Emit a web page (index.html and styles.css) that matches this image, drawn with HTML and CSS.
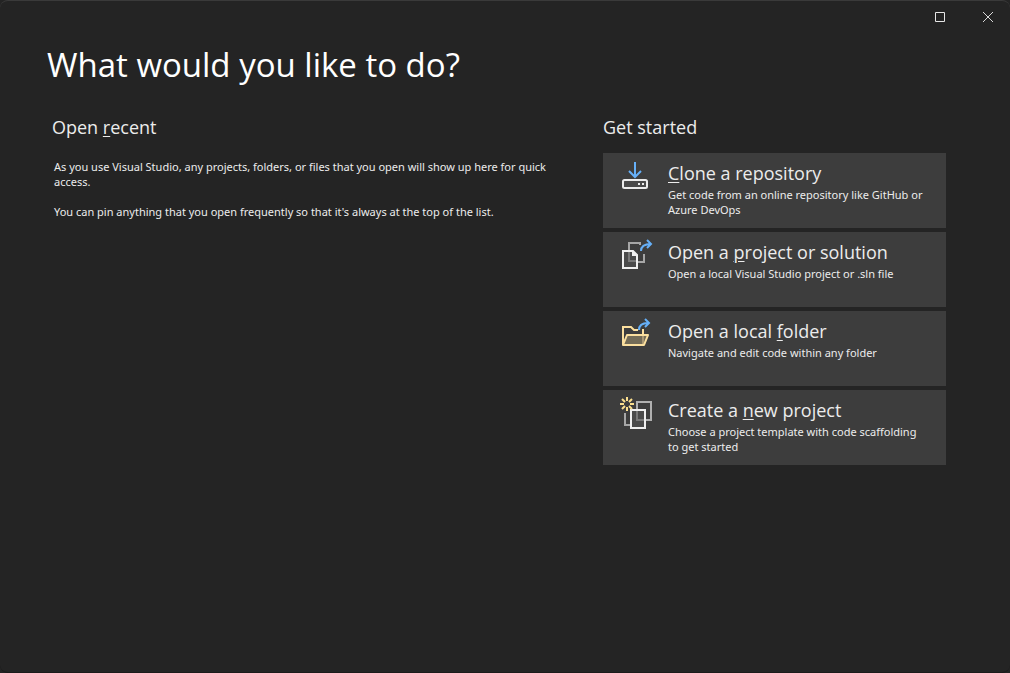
FILE: index.html
```html
<!DOCTYPE html>
<html lang="en">
<head>
<meta charset="utf-8">
<meta name="viewport" content="width=device-width, initial-scale=1">
<title>Visual Studio</title>
<link rel="stylesheet" href="styles.css">
</head>
<body>
<div class="window">
  <header class="titlebar">
    <button class="caption" type="button" aria-label="Maximize">
      <svg width="10" height="10" viewBox="0 0 10 10"><path d="M.5.5h9v9h-9z" fill="none" stroke="#e6e6e6"/></svg>
    </button>
    <button class="caption" type="button" aria-label="Close">
      <svg width="10" height="10" viewBox="0 0 10 10"><path d="M0 0l10 10M10 0L0 10" fill="none" stroke="#d8d8d8"/></svg>
    </button>
  </header>
  <main class="content">
    <h1 class="title">What would you like to do?</h1>
    <div class="columns">
      <section class="recent">
        <h2 class="heading">Open <u>r</u>ecent</h2>
        <div class="notes">
          <p>As you use Visual Studio, any projects, folders, or files that you open will show up here for quick access.</p>
          <p>You can pin anything that you open frequently so that it's always at the top of the list.</p>
        </div>
      </section>
      <section class="start">
        <h2 class="heading">Get started</h2>
        <div class="cards">
          <button class="card" type="button">
            <svg class="icon" width="36" height="36" viewBox="1 1 36 36" fill="none">
              <path d="M17 4v15M11 13l6 6 6-6" stroke="#66b0f8" stroke-width="2"/>
              <rect x="5" y="22" width="24" height="8" rx="1.500" fill="#4a4a4a" stroke="#ececec" stroke-width="2"/>
              <path d="M20 25h2v2h-2zM24 25h2v2h-2z" fill="#ececec"/>
            </svg>
            <span class="text"><span class="name"><u>C</u>lone a repository</span><span class="desc">Get code from an online repository like GitHub or Azure DevOps</span></span>
          </button>
          <button class="card" type="button">
            <svg class="icon" width="36" height="36" viewBox="1 1 36 36" fill="none">
              <path d="M11 14V6h11v2" stroke="#a6a6a6" stroke-width="2"/>
              <path d="M26 17v8h-6" stroke="#a6a6a6" stroke-width="2"/>
              <path d="M5 14h10l4 4v14H5z" fill="#4a4a4a"/>
              <path d="M11 15v9h8" stroke="#777" stroke-width="2"/>
              <path d="M5 14h10l4 4v13H5z" stroke="#efefef" stroke-width="2"/>
              <path d="M14 13l6 6h-6z" fill="#efefef"/>
              <path d="M23 14c0-5 3-7 10-7M29 3l4 4-4 4" stroke="#66b0f8" stroke-width="2"/>
            </svg>
            <span class="text"><span class="name">Open a <u>p</u>roject or solution</span><span class="desc">Open a local Visual Studio project or .sln file</span></span>
          </button>
          <button class="card" type="button">
            <svg class="icon" width="36" height="36" viewBox="1 1 36 36" fill="none">
              <path d="M9 19h22l-4 10H5z" fill="#746c57"/>
              <path d="M25 19v10" stroke="#aa9874" stroke-width="2"/>
              <path d="M5 29V11h8l3 3h4M25 13v5" stroke="#fbdf9e" stroke-width="2"/>
              <path d="M5 29l4-10h21l-4 10z" stroke="#fbdf9e" stroke-width="2" stroke-linejoin="round"/>
              <path d="M21 14c0-5 3-7 9-7M27 3l4 4-4 4" stroke="#66b0f8" stroke-width="2"/>
            </svg>
            <span class="text"><span class="name">Open a local <u>f</u>older</span><span class="desc">Navigate and edit code within any folder</span></span>
          </button>
          <button class="card" type="button">
            <svg class="icon" width="36" height="36" viewBox="1 1 36 36" fill="none">
              <path d="M7 18v12h5" stroke="#a6a6a6" stroke-width="2"/>
              <path d="M19 14V7h14v18h-6" stroke="#b0b0b0" stroke-width="2"/>
              <path d="M13 15h14v18H13z" fill="#4a4a4a"/>
              <path d="M19 16v9h8" stroke="#777" stroke-width="2"/>
              <path d="M13 15h14v18H13z" stroke="#efefef" stroke-width="2"/>
              <path d="M9 2v4M9 12v4M2 9h4M12 9h4M4 4l3 3M11 11l3 3M14 4l-3 3M7 11l-3 3" stroke="#fbdf8e" stroke-width="2"/>
            </svg>
            <span class="text"><span class="name">Create a <u>n</u>ew project</span><span class="desc">Choose a project template with code scaffolding to get started</span></span>
          </button>
        </div>
      </section>
    </div>
  </main>
</div>
</body>
</html>
```
FILE: styles.css
```css
* {
  box-sizing: border-box;
}

body {
  margin: 0;
  background: #242424;
  color: #ececec;
  font: 11px/15px "Noto Sans", "Open Sans", sans-serif;
}

.window {
  min-height: 100vh;
  border: 1px solid #3a3a3a;
  border-width: 1px 0;
  border-bottom-color: #1b1b1b;
  border-radius: 8px;
}

.titlebar {
  display: flex;
  justify-content: flex-end;
  height: 32px;
}

.caption {
  display: grid;
  place-items: center;
  width: 48px;
  padding: 0;
  border: 0;
  background: none;
}

.caption:last-child {
  margin-right: -2px;
}

.content {
  padding: 8px 64px 32px 47px;
}

.title,
.heading,
.name {
  font-family: "Open Sans", "Noto Sans", sans-serif;
  font-weight: 400;
}

.title {
  margin: 0;
  color: #fff;
  font-size: 33px;
  line-height: 48px;
}

.columns {
  display: grid;
  grid-template-columns: minmax(0, 1fr) 343px;
  gap: 36px;
  padding: 24px 0 0 5px;
}

.heading {
  margin: 0;
  font-size: 18px;
  line-height: 28px;
}

u {
  text-decoration-thickness: 1px;
  text-underline-offset: 2px;
}

.notes {
  padding: 18px 0 0 2px;
}

.notes p {
  margin: 0 0 15px;
}

.cards {
  display: grid;
  gap: 4px;
  padding-top: 12px;
}

.card {
  display: flex;
  align-items: flex-start;
  gap: 13px;
  min-height: 75px;
  padding: 6px 18px 6px 16px;
  border: 0;
  background: #3d3d3d;
  color: inherit;
  font: inherit;
  text-align: left;
}

.icon {
  flex: none;
}

.text,
.name,
.desc {
  display: block;
}

.name {
  font-size: 18px;
  line-height: 28px;
}
```
